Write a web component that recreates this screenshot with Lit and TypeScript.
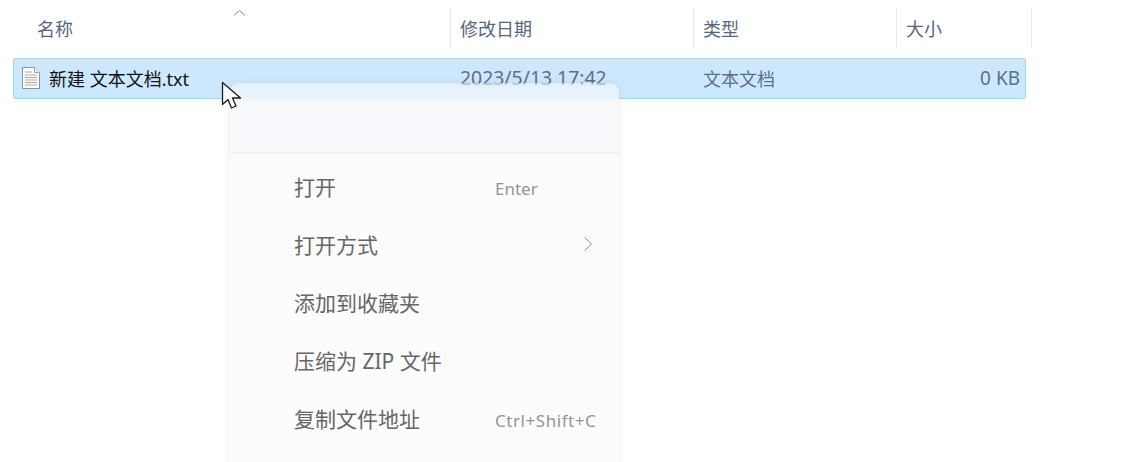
import { LitElement, html, css } from "lit";
import { customElement } from "lit/decorators.js";

@customElement("app-root")
export class AppRoot extends LitElement {
  static styles = css`
    :host {
      display: block;
      position: relative;
      width: 1130px;
      height: 462px;
      overflow: hidden;
      background: #fff;
      font-family: "Noto Sans", "Noto Sans CJK SC", sans-serif;
    }
    .header {
      display: grid;
      grid-template-columns: 451px 243px 203px 135px;
      width: 1032px;
      padding-top: 8px;
      height: 40px;
    }
    .hcell {
      position: relative;
      display: flex;
      align-items: center;
      height: 40px;
      border-right: 1px solid #e8e8e8;
      box-sizing: border-box;
      padding-left: 9px;
      padding-bottom: 1px;
      font-size: 18px;
      color: #55667c;
    }
    .hcell.first { padding-left: 37px; }
    .sort {
      position: absolute;
      left: 233px;
      top: 1px;
    }
    .row {
      display: grid;
      grid-template-columns: 446px 243px 203px 114px;
      align-items: center;
      width: 1013px;
      height: 41px;
      margin: 10px 0 0 13px;
      padding-bottom: 2px;
      box-sizing: border-box;
      background: #cce8ff;
      border: 1px solid #a3d3f5;
      border-radius: 2px;
      font-size: 18px;
      color: #5f6f82;
    }
    .name {
      display: flex;
      align-items: center;
      gap: 8px;
      padding-left: 7px;
      color: #111;
    }
    .size { text-align: right; font-size: 19px; }
    .date { font-size: 19.4px; line-height: 1; white-space: nowrap; }
    .menu {
      position: absolute;
      left: 230px;
      top: 83px;
      width: 389px;
      height: 400px;
      border-radius: 9px 9px 0 0;
      box-shadow: 0 0 9px rgba(0, 0, 0, 0.08);
      display: flex;
      flex-direction: column;
    }
    .toolbar {
      height: 71px;
      flex: none;
      box-sizing: border-box;
      border-radius: 9px 9px 0 0;
      border-bottom: 2px solid #f1f2f4;
      background: linear-gradient(
        rgba(232, 243, 253, 0.55) 0,
        rgba(232, 243, 253, 0.97) 5px,
        #e9f3fd 15px,
        #f8f9fc 18px
      );
    }
    .items {
      flex: 1;
      display: flex;
      flex-direction: column;
      padding-top: 3px;
      background: #fcfcfc;
    }
    .item {
      display: flex;
      align-items: center;
      justify-content: space-between;
      height: 58px;
      padding: 0 23px 0 64px;
      font-size: 21px;
      color: #666;
    }
    .key {
      width: 101px;
      padding-top: 4px;
      font-size: 17px;
      color: #949494;
      white-space: nowrap;
    }
    .key.long { letter-spacing: 0.55px; }
    .chev {
      width: 104px;
      display: flex;
      justify-content: flex-end;
      padding-right: 3px;
      box-sizing: border-box;
    }
    .cursor {
      position: absolute;
      left: 221px;
      top: 81px;
    }
  `;

  render() {
    const items: [string, string?, boolean?][] = [
      ["打开", "Enter"],
      ["打开方式", undefined, true],
      ["添加到收藏夹"],
      ["压缩为 ZIP 文件"],
      ["复制文件地址", "Ctrl+Shift+C"],
    ];
    return html`
      <div class="header">
        <div class="hcell first">
          名称
          <svg class="sort" width="13" height="8" viewBox="0 0 13 8">
            <path d="M1 6.5 6.5 1.5 12 6.5" fill="none" stroke="#7d838a" stroke-width="1"/>
          </svg>
        </div>
        <div class="hcell">修改日期</div>
        <div class="hcell">类型</div>
        <div class="hcell">大小</div>
      </div>
      <div class="row">
        <div class="name">
          <svg width="20" height="22" viewBox="0 0 20 22">
            <path d="M1.5.5h12l5 5v16h-17z" fill="#fdfdfd" stroke="#8f8f8f"/>
            <path d="M13.5.5v5h5" fill="#eee" stroke="#a5a5a5"/>
            <path d="M4 5h7M4 8h12M4 10.5h12M4 13h12M4 15.5h12M4 18h12" stroke="#a9a9a9" stroke-width="1"/>
          </svg>
          <span>新建 文本文档.txt</span>
        </div>
        <div class="date">2023/5/13 17:42</div>
        <div>文本文档</div>
        <div class="size">0 KB</div>
      </div>
      <div class="menu">
        <div class="toolbar"></div>
        <div class="items">
          ${items.map(
            ([label, key, sub]) => html`
              <div class="item">
                <span>${label}</span>
                ${key
                  ? html`<span class="key ${key.length > 6 ? "long" : ""}">${key}</span>`
                  : sub
                  ? html`<span class="chev"><svg width="10" height="16" viewBox="0 0 10 16"><path d="M1.5 1.5 8.5 8 1.5 14.5" fill="none" stroke="#8a8a8a" stroke-width="1"/></svg></span>`
                  : ""}
              </div>
            `
          )}
        </div>
      </div>
      <svg class="cursor" width="22" height="30" viewBox="0 0 22 30">
        <path d="M1.5 1.5V23.5L7 18.5 10.5 27 15 25 11.5 17H19.5Z" fill="#fff" stroke="#1a1a1a" stroke-width="1.3" stroke-linejoin="round"/>
      </svg>
    `;
  }
}
